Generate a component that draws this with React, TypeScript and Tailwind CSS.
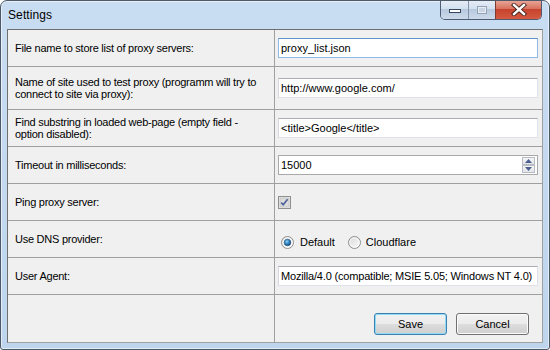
import React from "react";

function TextBox({ children, focused, tight }: { children: React.ReactNode; focused?: boolean; tight?: boolean }) {
  return (
    <div
      className={
        "ml-[3px] mr-[4px] h-[20px] flex items-center bg-white pl-[2px] whitespace-nowrap overflow-hidden border " +
        (tight ? "tracking-[-0.18px] " : "") +
        (focused
          ? "border-[#8ebbe6] border-t-[#5c95cc]"
          : "border-[#dfe2e8] border-t-[#abadb3] border-l-[#d5d8de]")
      }
    >
      {children}
    </div>
  );
}

function SpinBox({ value }: { value: string }) {
  return (
    <div className="ml-[3px] mr-[4px] h-[20px] flex items-center bg-white pl-[2px] border border-[#a9a9a9]">
      <span className="flex-1">{value}</span>
      <div className="flex flex-col gap-0 mr-[2px]">
        {["up", "down"].map((d) => (
          <div
            key={d}
            className="w-[13px] h-[8px] flex items-center justify-center border border-[#b8bcc4] bg-[linear-gradient(to_bottom,#f6f6f6,#e2e4e8)]"
          >
            <svg width="7" height="4" viewBox="0 0 7 4" aria-hidden="true">
              <path d={d === "up" ? "M3.5 0L7 4H0z" : "M0 0h7L3.5 4z"} fill="#4a5f8e" />
            </svg>
          </div>
        ))}
      </div>
    </div>
  );
}

function Radio({ checked }: { checked?: boolean }) {
  return (
    <svg width="13" height="13" viewBox="0 0 13 13" aria-hidden="true">
      <defs>
        <linearGradient id="rf" x1="0" y1="0" x2="1" y2="1">
          <stop offset="0" stopColor="#d9d9d9" />
          <stop offset="1" stopColor="#fbfbfb" />
        </linearGradient>
        <radialGradient id="rd" cx="0.4" cy="0.35" r="0.7">
          <stop offset="0" stopColor="#8fd0f4" />
          <stop offset="0.55" stopColor="#2a7fbc" />
          <stop offset="1" stopColor="#0d3f6e" />
        </radialGradient>
      </defs>
      <circle cx="6.5" cy="6.5" r="6" fill="url(#rf)" stroke="#8f8f8f" />
      <circle cx="6.5" cy="6.5" r="4.6" fill="none" stroke="#ffffff" strokeWidth="0.8" />
      {checked && <circle cx="6.5" cy="6.5" r="3.3" fill="url(#rd)" stroke="#1c4f7f" strokeWidth="0.6" />}
    </svg>
  );
}

function CheckBox() {
  return (
    <svg width="13" height="13" viewBox="0 0 13 13" aria-hidden="true">
      <rect x="0.5" y="0.5" width="12" height="12" fill="#f4f4f4" stroke="#8e8f8f" />
      <rect x="2" y="2" width="9" height="9" fill="#dcdcdc" stroke="#c4c4c4" />
      <path d="M3.2 6.4l2 2.4 4.4-5.6" fill="none" stroke="#4b5f9c" strokeWidth="1.6" />
    </svg>
  );
}

function Label({ children }: { children: React.ReactNode }) {
  return (
    <div className="bg-[#f0f0f0] flex items-center pl-[7px] leading-[12px] tracking-[-0.25px] whitespace-nowrap">
      <span>{children}</span>
    </div>
  );
}

function Cell({ children }: { children: React.ReactNode }) {
  return <div className="bg-[#f0f0f0] flex flex-col justify-center">{children}</div>;
}

function WinButton({ children, primary }: { children: React.ReactNode; primary?: boolean }) {
  return (
    <button
      className={
        "w-[73px] h-[22px] rounded-[3px] border bg-[linear-gradient(to_bottom,#f2f2f2_0%,#ebebeb_50%,#dddddd_50%,#cfcfcf_100%)] " +
        (primary
          ? "border-[#3c7fb1] shadow-[inset_0_0_0_1px_#8fdcf7]"
          : "border-[#707070] shadow-[inset_0_0_0_1px_#fbfbfb]")
      }
    >
      {children}
    </button>
  );
}

export default function App() {
  return (
    <div className="w-[550px] h-[350px] flex flex-col rounded-t-[7px] rounded-b-[3px] border border-[#4d5968] bg-[linear-gradient(to_bottom,#c9ddf2,#bed5ed)] shadow-[inset_0_0_0_1px_rgba(255,255,255,0.55)] font-['Liberation_Sans',Arial,sans-serif] text-[11px] text-black overflow-hidden">
      {/* title bar */}
      <div className="h-[28px] flex justify-between">
        <div className="pl-[7px] flex items-center text-[12px] tracking-[0.1px]">Settings</div>
        <div className="-mt-px mr-[7px] h-[20px] flex border-x border-b border-[#4e5d74] rounded-b-[5px] overflow-hidden">
          <div className="w-[27px] flex items-center justify-center pt-[3px] bg-[linear-gradient(to_bottom,#e7eef7_0%,#d3e0ee_45%,#b8c9de_50%,#ccdaea_100%)]">
            <div className="w-[12px] h-[4px] bg-white border border-[#35465e]" />
          </div>
          <div className="w-[27px] flex items-center justify-center border-l border-[#8293ab] bg-[linear-gradient(to_bottom,#e7eef7_0%,#d3e0ee_45%,#b8c9de_50%,#ccdaea_100%)]">
            <div className="w-[10px] h-[8px] border border-[#95a2b4] bg-[#c9d5e3] shadow-[inset_0_0_0_1px_#e6edf5]" />
          </div>
          <div className="w-[46px] flex items-center justify-center border-l border-[#7c3a30] bg-[linear-gradient(to_bottom,#eaaa9c_0%,#d8735f_45%,#c7432d_50%,#d45a40_100%)]">
            <svg width="16" height="13" viewBox="0 0 16 13" aria-hidden="true">
              <path d="M3 2l10 9M13 2L3 11" stroke="#3a1c18" strokeWidth="4.2" strokeLinecap="square" />
              <path d="M3 2l10 9M13 2L3 11" stroke="#ffffff" strokeWidth="2.4" strokeLinecap="square" />
            </svg>
          </div>
        </div>
      </div>

      {/* client */}
      <div className="mx-[6px] mb-[6px] grid grid-cols-[266px_267px] grid-rows-[36px_42px_36px_36px_36px_36px_36px_47px] gap-px bg-[#a0a0a0] border border-[#a0a0a0] border-l-[#6f6f6f] border-t-[#6f6f6f]">
        <Label>File name to store list of proxy servers:</Label>
        <Cell>
          <TextBox focused>proxy_list.json</TextBox>
        </Cell>

        <Label>
          Name of site used to test proxy (programm will try to
          <br />
          connect to site via proxy):
        </Label>
        <Cell>
          <TextBox>http://www.google.com/</TextBox>
        </Cell>

        <Label>
          Find substring in loaded web-page (empty field -
          <br />
          option disabled):
        </Label>
        <Cell>
          <TextBox>&lt;title&gt;Google&lt;/title&gt;</TextBox>
        </Cell>

        <Label>Timeout in milliseconds:</Label>
        <Cell>
          <SpinBox value="15000" />
        </Cell>

        <Label>Ping proxy server:</Label>
        <Cell>
          <div className="ml-[3px] flex">
            <CheckBox />
          </div>
        </Cell>

        <Label>Use DNS provider:</Label>
        <Cell>
          <div className="ml-[6px] pt-[7px] flex items-center">
            <Radio checked />
            <span className="ml-[6px]">Default</span>
            <span className="ml-[13px] flex">
              <Radio />
            </span>
            <span className="ml-[5px]">Cloudflare</span>
          </div>
        </Cell>

        <Label>User Agent:</Label>
        <Cell>
          <TextBox tight>Mozilla/4.0 (compatible; MSIE 5.05; Windows NT 4.0)</TextBox>
        </Cell>

        <div className="bg-[#f0f0f0]" />
        <div className="bg-[#f0f0f0] flex items-end justify-end gap-[9px] pr-[13px] pb-[7px]">
          <WinButton primary>Save</WinButton>
          <WinButton>Cancel</WinButton>
        </div>
      </div>
    </div>
  );
}
